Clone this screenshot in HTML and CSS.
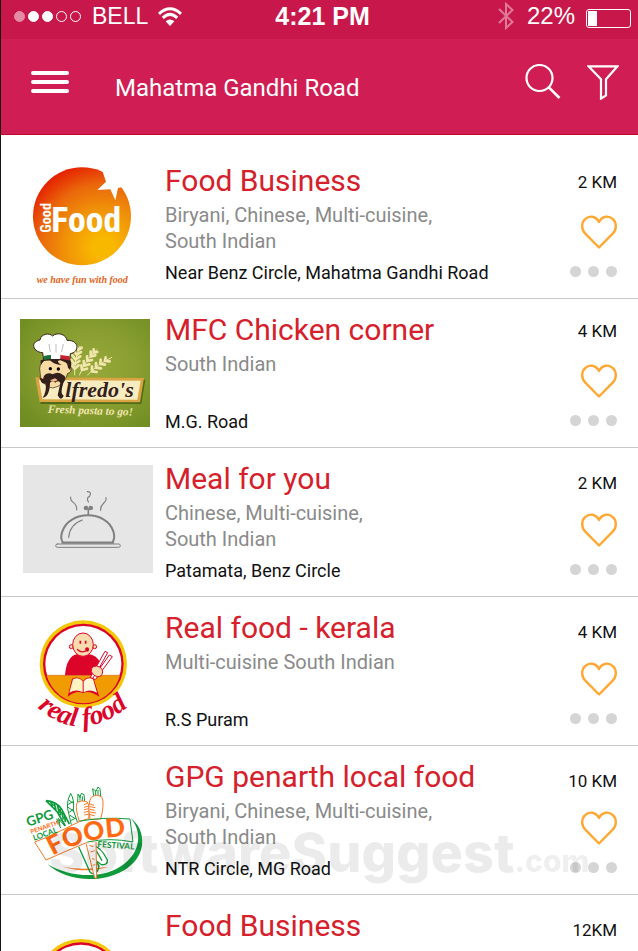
FILE: index.html
```html
<!DOCTYPE html>
<html lang="en">
<head>
    <meta charset="utf-8">
    <title>Restaurants</title>
    <link rel="stylesheet" href="styles.css">
</head>
<body>
    <svg class="defs" aria-hidden="true">
        <symbol id="heart" viewBox="0 0 36 34">
            <path d="M18 32.5 L4.3 18.6 C0.2 14.3 0.2 7.8 4.1 4.2 C8.2 0.2 14.6 0.6 18 7 C21.4 0.6 27.8 0.2 31.9 4.2 C35.8 7.8 35.8 14.3 31.7 18.6 Z" fill="none" stroke="#ffa733" stroke-width="2.4" stroke-linejoin="round"/>
        </symbol>
        <symbol id="real-food" viewBox="0 0 492 444">
            <g transform="translate(-3 9)">
                <circle cx="250" cy="192" r="131" fill="#f4c70a"/>
                <circle cx="250" cy="192" r="121" fill="#dc0428"/>
                <circle cx="250" cy="192" r="114" fill="#fff"/>
                <path d="M140 226 H360 A114 114 0 0 1 140 226Z" fill="#f09c00"/>
                <path d="M140 226 H360" stroke="#dc6a20" stroke-width="2"/>
                <path d="M195 226 C198 190 210 166 230 163 Q250 172 268 163 C288 166 299 180 304 198 L296 226Z" fill="#dc0428"/>
                <g fill="#fbdcae" stroke="#dc0428" stroke-width="3">
                    <circle cx="214" cy="140" r="6"/>
                    <circle cx="284" cy="140" r="6"/>
                    <ellipse cx="249" cy="134" rx="31" ry="35"/>
                </g>
                <path d="M241 122v9M257 122v9" stroke="#dc0428" stroke-width="5"/>
                <path d="M231 148 Q246 163 266 148" fill="none" stroke="#dc0428" stroke-width="4"/>
                <path d="M256 144 q7 -5 11 2 q1 9 -6 9 q-7 -3 -5 -11z" fill="#dc0428"/>
                <g fill="#fff" stroke="#dc0428" stroke-width="3">
                    <path d="M271 232 L315 154 L323 158 L279 237Z"/>
                    <path d="M278 235 L328 165 L337 170 L286 239Z"/>
                </g>
                <path d="M274 207 q3 -10 16 -9 q18 4 18 18 q-2 15 -16 14 q-20 -6 -18 -23z" fill="#fbdcae" stroke="#dc0428" stroke-width="3"/>
                <path d="M203 290 L216 236 Q236 226 249 242 Q263 226 281 236 L298 290 Q266 268 249 280 Q230 268 203 290Z" fill="#dc0428"/>
                <path d="M208 278 L219 238 Q237 230 248 244 V277 Q230 265 208 278Z" fill="#fff3c2"/>
                <path d="M291 278 L279 238 Q263 230 251 244 V277 Q268 265 291 278Z" fill="#fff7d8"/>
                <path id="real-food-arc" d="M112 322 Q250 450 416 292" fill="none"/>
                <text class="real-name"><textPath href="#real-food-arc">real food</textPath></text>
            </g>
        </symbol>
    </svg>

    <div class="app">
        <div class="status-bar">
            <div class="carrier">
                <span class="signal"><i class="dim"></i><i class="on"></i><i class="on"></i><i></i><i></i></span>
                <span class="network">BELL</span>
                <svg class="wifi" viewBox="0 0 24 19">
                    <g fill="none" stroke="#fff" stroke-width="3">
                        <path d="M1 6.800 Q12 -3.200 23 6.800"/>
                        <path d="M4.800 10.800 Q12 4 19.200 10.800"/>
                    </g>
                    <path d="M12 19 L7.600 14.200 Q12 10.600 16.400 14.200Z" fill="#fff"/>
                </svg>
            </div>
            <div class="clock">4:21 PM</div>
            <div class="power">
                <svg class="bluetooth" viewBox="0 0 16 28">
                    <path d="M1 7 L14.500 20 L8 26 V2 L14.500 8 L1 21" fill="none" stroke="#e07a99" stroke-width="2"/>
                </svg>
                <span class="percent">22%</span>
                <span class="battery"><span style="width: 22%"></span></span>
            </div>
        </div>

        <header class="top-bar">
            <button class="menu" aria-label="Menu"><i></i><i></i><i></i></button>
            <h1>Mahatma Gandhi Road</h1>
            <button class="search" aria-label="Search">
                <svg viewBox="0 0 36 36" fill="none" stroke="#fff">
                    <circle cx="14.500" cy="14" r="13" stroke-width="2.200"/>
                    <path d="M23.800 23.300 L34.500 34" stroke-width="2.600"/>
                </svg>
            </button>
            <button class="filter" aria-label="Filter">
                <svg viewBox="0 0 32 36" fill="none" stroke="#fff" stroke-width="2.200">
                    <path d="M1.500 2.300 H30.500 L19 15.200 V31.400 L14 34.600 V15.200Z"/>
                </svg>
            </button>
        </header>

        <ul class="list">
            <li class="item">
                <svg class="logo" viewBox="3 30 492 444" role="img" aria-label="Good Food">
                    <defs>
                        <radialGradient id="sun" cx="0.72" cy="0.82" r="0.88">
                            <stop offset="0.12" stop-color="#f9b800"/>
                            <stop offset="0.45" stop-color="#f09208"/>
                            <stop offset="0.74" stop-color="#ea670b"/>
                            <stop offset="1" stop-color="#e52200"/>
                        </radialGradient>
                    </defs>
                    <circle cx="246" cy="229" r="147" fill="url(#sun)"/>
                    <path d="M300 72 L318 125 L292 150 L331 148 L346 181 L354 144 L368 141 L400 130 L350 70Z" fill="#fff"/>
                    <text class="good" transform="translate(154 278) rotate(-90)">Good</text>
                    <text class="food" x="154" y="275">Food</text>
                    <text class="slogan" x="110" y="428">we have fun with food</text>
                </svg>
                <div class="info">
                    <h2>Food Business</h2>
                    <p class="cuisine">Biryani, Chinese, Multi-cuisine,<br>South Indian</p>
                    <p class="place">Near Benz Circle, Mahatma Gandhi Road</p>
                </div>
                <div class="side">
                    <span class="distance">2 KM</span>
                    <button class="like" aria-label="Like"><svg><use href="#heart"/></svg></button>
                    <button class="more" aria-label="More"><i></i><i></i><i></i></button>
                </div>
            </li>

            <li class="item">
                <svg class="logo" viewBox="3 -3 492 444" role="img" aria-label="Alfredo's">
                    <defs>
                        <radialGradient id="leaf" cx="0.55" cy="0.45" r="0.7">
                            <stop offset="0" stop-color="#97a83a"/>
                            <stop offset="0.5" stop-color="#899e31"/>
                            <stop offset="1" stop-color="#6f8d22"/>
                        </radialGradient>
                    </defs>
                    <rect x="60" y="57" width="390" height="324" fill="url(#leaf)"/>
                    <g fill="none" stroke="#f1e6ad" stroke-width="3">
                        <path d="M224 226 Q222 180 240 138M238 226 Q258 176 292 148M262 226 Q292 192 336 172"/>
                        <path d="M224 206l-10-12M224 206l12-10M223 192l-9-12M224 192l14-9M226 178l-9-12M227 178l14-9M230 164l-8-11M231 164l12-8M235 150l-6-10M235 150l10-7" stroke-width="8" stroke-linecap="round"/>
                        <path d="M246 210l-2-14M246 210l15-4M253 197l-2-14M253 197l15-4M262 183l-1-14M262 183l14-3M272 169l0-14M272 169l14-3M281 158l0-10M281 158l11-2" stroke-width="8" stroke-linecap="round"/>
                        <path d="M276 214l0-14M276 214l14 2M288 203l0-14M288 203l15 2M301 192l1-13M301 192l14 2M315 183l2-11M315 183l14 1" stroke-width="8" stroke-linecap="round"/>
                    </g>
                    <path d="M109 235 L436 239 L424 312 L122 312Z" fill="#506a18"/>
                    <path d="M106 232 L432 234 L420 307 L119 306Z" fill="#dba443"/>
                    <path d="M117 240 L422 242 L412 299 L127 298Z" fill="#f6ecc0"/>
                    <path d="M124 182 Q115 205 122 232 Q132 260 158 264 Q193 258 203 220 Q214 219 213 205 L205 178Z" fill="#f8dba2" stroke="#33201a" stroke-width="2"/>
                    <path d="M122 181 Q160 166 211 180 Q217 193 210 210 L204 203 Q203 187 192 185 L180 180 Q165 183 185 195 Q160 193 150 180 Q132 177 123 195Z" fill="#33201a"/>
                    <path d="M131 180 L128 158 C98 156 90 126 120 120 C122 100 151 98 157 108 C176 93 200 106 201 121 C239 120 239 156 211 161 L209 181 Q165 168 131 180Z" fill="#fff" stroke="#33201a" stroke-width="3"/>
                    <path d="M147 132l4 24M168 132v26M190 132l-5 24" stroke="#bdbdbd" stroke-width="3"/>
                    <path d="M132 168 Q142 165 153 165 V177 Q142 177 132 180Z" fill="#1d6f3c"/>
                    <path d="M153 165 H181 V177 H153Z" fill="#fff"/>
                    <path d="M181 165 L209 169 V181 L181 177Z" fill="#c52232"/>
                    <circle cx="151" cy="206" r="5"/>
                    <circle cx="175" cy="207" r="5"/>
                    <path d="M158 223 C142 214 130 226 130 236 Q121 238 118 228 Q122 255 137 251 Q140 275 128 293 Q149 290 150 248 Q157 239 166 248 Q176 239 181 249 L173 286 Q183 306 191 287 Q179 284 190 249 Q202 230 189 225 Q174 213 158 223Z" fill="#33201a"/>
                    <path d="M150 241 Q161 250 173 240 L165 235Z" fill="#eeb58b"/>
                    <text class="alfredo" x="196" y="292">lfredo's</text>
                    <text class="pasta" x="143" y="338" transform="rotate(2 143 338)">Fresh pasta to go!</text>
                </svg>
                <div class="info">
                    <h2>MFC Chicken corner</h2>
                    <p class="cuisine">South Indian</p>
                    <p class="place">M.G. Road</p>
                </div>
                <div class="side">
                    <span class="distance">4 KM</span>
                    <button class="like" aria-label="Like"><svg><use href="#heart"/></svg></button>
                    <button class="more" aria-label="More"><i></i><i></i><i></i></button>
                </div>
            </li>

            <li class="item low">
                <svg class="logo" viewBox="3 -6 492 444" role="img" aria-label="No logo">
                    <rect x="69" y="45" width="390" height="324" fill="#e6e6e6"/>
                    <g fill="none" stroke="#808080" stroke-linecap="round">
                        <path d="M188 276 Q180 265 187 244 C209 180 319 180 340 244 Q346 265 338 276" stroke-width="6"/>
                        <path d="M188 278 H339" stroke-width="7"/>
                        <rect x="167" y="282" width="194" height="10" rx="5" stroke-width="3"/>
                        <path d="M206 262 Q210 223 247 210" stroke-width="3.500"/>
                        <path d="M265 179 V194" stroke-width="5"/>
                        <path d="M212 141 C208 160 233 154 230 180M262 125 C278 124 270 140 264 142 Q260 151 266 156M318 143 C323 160 299 158 302 181" stroke-width="3.500"/>
                    </g>
                    <circle cx="258" cy="174" r="7" fill="#808080"/>
                    <circle cx="272" cy="174" r="7" fill="#808080"/>
                </svg>
                <div class="info">
                    <h2>Meal for you</h2>
                    <p class="cuisine">Chinese, Multi-cuisine,<br>South Indian</p>
                    <p class="place">Patamata, Benz Circle</p>
                </div>
                <div class="side">
                    <span class="distance">2 KM</span>
                    <button class="like" aria-label="Like"><svg><use href="#heart"/></svg></button>
                    <button class="more" aria-label="More"><i></i><i></i><i></i></button>
                </div>
            </li>

            <li class="item low">
                <svg class="logo" viewBox="0 0 492 444" role="img" aria-label="Real food"><use href="#real-food" width="492" height="444"/></svg>
                <div class="info">
                    <h2>Real food - kerala</h2>
                    <p class="cuisine">Multi-cuisine South Indian</p>
                    <p class="place">R.S Puram</p>
                </div>
                <div class="side">
                    <span class="distance">4 KM</span>
                    <button class="like" aria-label="Like"><svg><use href="#heart"/></svg></button>
                    <button class="more" aria-label="More"><i></i><i></i><i></i></button>
                </div>
            </li>

            <li class="item low">
                <svg class="logo" viewBox="3 -12 492 444" role="img" aria-label="GPG Penarth Local Food Festival">
                    <path d="M392 204 C440 240 444 320 370 362 C290 406 190 388 142 342 C200 378 290 388 350 356 C420 320 432 250 392 204Z" fill="#0f9a3c"/>
                    <path d="M188 350 Q250 362 326 350 Q260 372 188 350Z" fill="#f47a2a"/>
                    <g fill="none" stroke="#0f9a3c" stroke-width="3">
                        <path d="M138 152 Q168 154 184 176 L208 222M138 152 L172 186 L196 228M150 154l10 14M162 158l6 22M172 166l6 22M180 176l2 20M186 184l4 24M194 196l2 20" stroke-width="5"/>
                        <path d="M212 130 Q196 160 206 190 L214 224M212 130 Q224 150 220 180 L232 216M206 150l14 10M203 164l18 -10M204 172l18 12M206 188l14 -10M210 196l16 10M212 212l16 -8"/>
                        <path d="M170 206 L182 234M174 204l20 24M168 216l14-6M180 226l-4-20"/>
                        <path d="M233 156 L234 132 L240 142 L244 130 L252 134 L254 156Z" />
                        <path d="M240 152v-16M247 153v-14" />
                        <path d="M281 138 L278 116 L288 124 L294 111 L300 116 L302 138Z"/>
                        <path d="M287 136v-14M294 136v-16"/>
                        <path d="M236 290 L270 366 Q282 378 292 364 Q300 350 290 336 L264 276M262 284 L298 350M280 290 Q300 286 322 330 Q324 346 304 344 L286 330M290 304 L306 332" stroke-width="4"/>
                    </g>
                    <g fill="#fff" stroke="#f47a2a" stroke-width="3">
                        <path d="M238 214 Q226 178 230 160 Q242 148 262 156 Q270 170 266 206Z"/>
                        <path d="M270 208 Q262 160 274 142 Q290 130 306 142 Q314 160 302 208Z"/>
                        <path d="M262 160l-10 4M266 168l-14 4M266 176l-14 3M267 184l-16 3M267 192l-14 3M270 162l12 4M270 170l16 3M270 178l14 3M270 186l18 3M270 194l14 3"/>
                        <path d="M258 280 L284 384 L290 384 L288 274Z"/>
                        <path d="M268 286l12 4M272 306l12 -4M276 326l8 2M278 346l8 -2"/>
                    </g>
                    <path d="M102 278 C190 240 260 196 394 206 L402 278 C290 258 230 288 146 330Z" fill="#fff"/>
                    <path d="M236 214 Q310 200 390 207 L399 276 Q330 262 262 276" fill="none" stroke="#0f9a3c" stroke-width="3"/>
                    <path d="M240 214 C190 238 150 260 104 276 L138 330 Q200 302 262 277" fill="none" stroke="#f47a2a" stroke-width="3"/>
                    <path id="food-arc" d="M158 318 Q256 260 400 258" fill="none"/>
                    <text class="fest-food"><textPath href="#food-arc">FOOD</textPath></text>
                    <text class="fest-gpg" transform="translate(84 230) rotate(-18)">GPG</text>
                    <text class="fest-penarth" transform="translate(94 252) rotate(-19)">PENARTH</text>
                    <text class="fest-local" transform="translate(102 272) rotate(-19)">LOCAL</text>
                    <text class="fest-festival" transform="translate(292 291) rotate(4)">FESTIVAL</text>
                </svg>
                <div class="info">
                    <h2>GPG penarth local food</h2>
                    <p class="cuisine">Biryani, Chinese, Multi-cuisine,<br>South Indian</p>
                    <p class="place">NTR Circle, MG Road</p>
                </div>
                <div class="side">
                    <span class="distance">10 KM</span>
                    <button class="like" aria-label="Like"><svg><use href="#heart"/></svg></button>
                    <button class="more" aria-label="More"><i></i><i></i><i></i></button>
                </div>
                <div class="watermark">SoftwareSuggest<small>.com</small></div>
            </li>

            <li class="item low">
                <svg class="logo" viewBox="7 -62 492 444" role="img" aria-label="Real food"><use href="#real-food" width="492" height="444"/></svg>
                <div class="info">
                    <h2>Food Business</h2>
                </div>
                <div class="side">
                    <span class="distance">12KM</span>
                </div>
            </li>
        </ul>
    </div>
</body>
</html>
```

FILE: styles.css
```css
* {
    box-sizing: border-box;
}
body {
    margin: 0;
    background-color: #fff;
    font-family: Roboto, "Liberation Sans", sans-serif;
}
h1, h2, p, ul {
    margin: 0;
    padding: 0;
    font-weight: 400;
}
button {
    padding: 0;
    border: none;
    background: none;
    cursor: pointer;
}
svg {
    display: block;
}
.defs {
    position: absolute;
    width: 0;
    height: 0;
}
.app {
    display: flex;
    flex-direction: column;
    height: 100vh;
    border-left: 1px solid #161214;
}

/* status bar */
.status-bar {
    display: grid;
    grid-template-columns: 1fr auto 1fr;
    flex: none;
    height: 39px;
    padding: 0 7px 7px 13px;
    background-color: #c8184b;
    color: #fff;
    font-family: "Liberation Sans", sans-serif;
    font-size: 24px;
    line-height: 32px;
}
.carrier, .power {
    display: flex;
    align-items: center;
}
.power {
    justify-content: flex-end;
}
.signal {
    display: flex;
    gap: 3px;
}
.signal i {
    width: 11px;
    height: 11px;
    border: 1px solid #fff;
    border-radius: 50%;
}
.signal .on {
    background-color: #fff;
}
.signal .dim {
    border-color: #e48ba6;
    background-color: #e48ba6;
}
.network {
    margin: 0 10px 0 11px;
    font-size: 23px;
}
.wifi {
    width: 24px;
    height: 19px;
}
.clock {
    font-size: 25px;
    font-weight: 700;
}
.bluetooth {
    width: 16px;
    height: 28px;
}
.percent {
    margin: 0 11px 0 13px;
}
.battery {
    width: 45px;
    height: 19px;
    margin-top: 4px;
    padding: 1px;
    border: 1px solid #fff;
    border-radius: 3px;
}
.battery span {
    display: block;
    height: 100%;
    background-color: #fff;
}

/* header */
.top-bar {
    display: flex;
    align-items: center;
    flex: none;
    height: 96px;
    padding: 0 19px 10px 30px;
    border-bottom: 1px solid #bf0a2a;
    background-color: #d01e54;
    color: #fff;
}
.top-bar h1 {
    flex: 1;
    margin-left: 46px;
    padding-top: 12px;
    font-size: 24px;
    line-height: 32px;
}
.menu {
    display: flex;
    flex-direction: column;
    gap: 5px;
    width: 38px;
}
.menu i {
    height: 4px;
    border-radius: 2px;
    background-color: #fff;
}
.search svg {
    width: 36px;
    height: 36px;
}
.filter {
    margin-left: 26px;
}
.filter svg {
    width: 32px;
    height: 36px;
}

/* restaurant list */
.list {
    flex: 1;
    min-height: 0;
    padding-top: 15px;
    overflow-y: auto;
    scrollbar-width: none;
    list-style: none;
}
.item {
    position: relative;
    display: flex;
    height: 149px;
    border-bottom: 1px solid #c8c8c8;
}
.logo {
    flex: none;
    width: 164px;
    height: 148px;
}
.info {
    display: flex;
    flex-direction: column;
    flex: 1;
    padding: 12px 0 13px;
}
.info h2 {
    color: #d6202b;
    font-size: 30px;
    line-height: 38px;
}
.cuisine {
    padding-top: 2px;
    color: #8a8a8a;
    font-size: 20px;
    line-height: 26px;
}
.place {
    margin-top: auto;
    color: #111;
    font-size: 18px;
    line-height: 24px;
}
.side {
    display: flex;
    flex-direction: column;
    align-items: flex-end;
    padding-right: 21px;
}
.distance {
    height: 65px;
    padding-top: 20px;
    color: #111;
    font-size: 17px;
    line-height: 24px;
}
.low .distance {
    padding-top: 23px;
}
.like svg {
    width: 36px;
    height: 34px;
}
.more {
    display: flex;
    gap: 7px;
    margin-top: 17px;
}
.more i {
    width: 11px;
    height: 11px;
    border-radius: 50%;
    background-color: #d5d5d5;
}
.watermark {
    position: absolute;
    top: 70px;
    left: 48px;
    color: rgba(0, 0, 0, 0.08);
    font-family: Inter, "Open Sans", sans-serif;
    font-size: 54px;
    font-weight: 800;
    line-height: 74px;
    pointer-events: none;
}
.watermark small {
    font-size: 30px;
}

/* logo lettering */
.good, .food {
    fill: #fff;
    font-family: "Roboto Condensed", Roboto, sans-serif;
    font-weight: 700;
}
.good {
    font-size: 43px;
}
.food {
    font-size: 107px;
}
.slogan {
    fill: #e0641a;
    font: italic 700 30px "Liberation Serif", serif;
}
.alfredo {
    fill: #33201a;
    font: italic 700 66px "Liberation Serif", serif;
}
.pasta {
    fill: #f1e6ad;
    font: italic 700 34px "Liberation Serif", serif;
}
.real-name {
    fill: #dc0428;
    font: italic 700 82px "Liberation Serif", serif;
}
.fest-food, .fest-gpg, .fest-penarth, .fest-local, .fest-festival {
    fill: #0f9a3c;
    font-family: Lato, sans-serif;
    font-weight: 700;
}
.fest-food {
    fill: #ff6a13;
    font-size: 78px;
    font-weight: 900;
}
.fest-gpg {
    font-size: 40px;
}
.fest-penarth {
    fill: #ff6a13;
    font-size: 19px;
}
.fest-local {
    font-size: 24px;
}
.fest-festival {
    font-size: 25px;
}
```
